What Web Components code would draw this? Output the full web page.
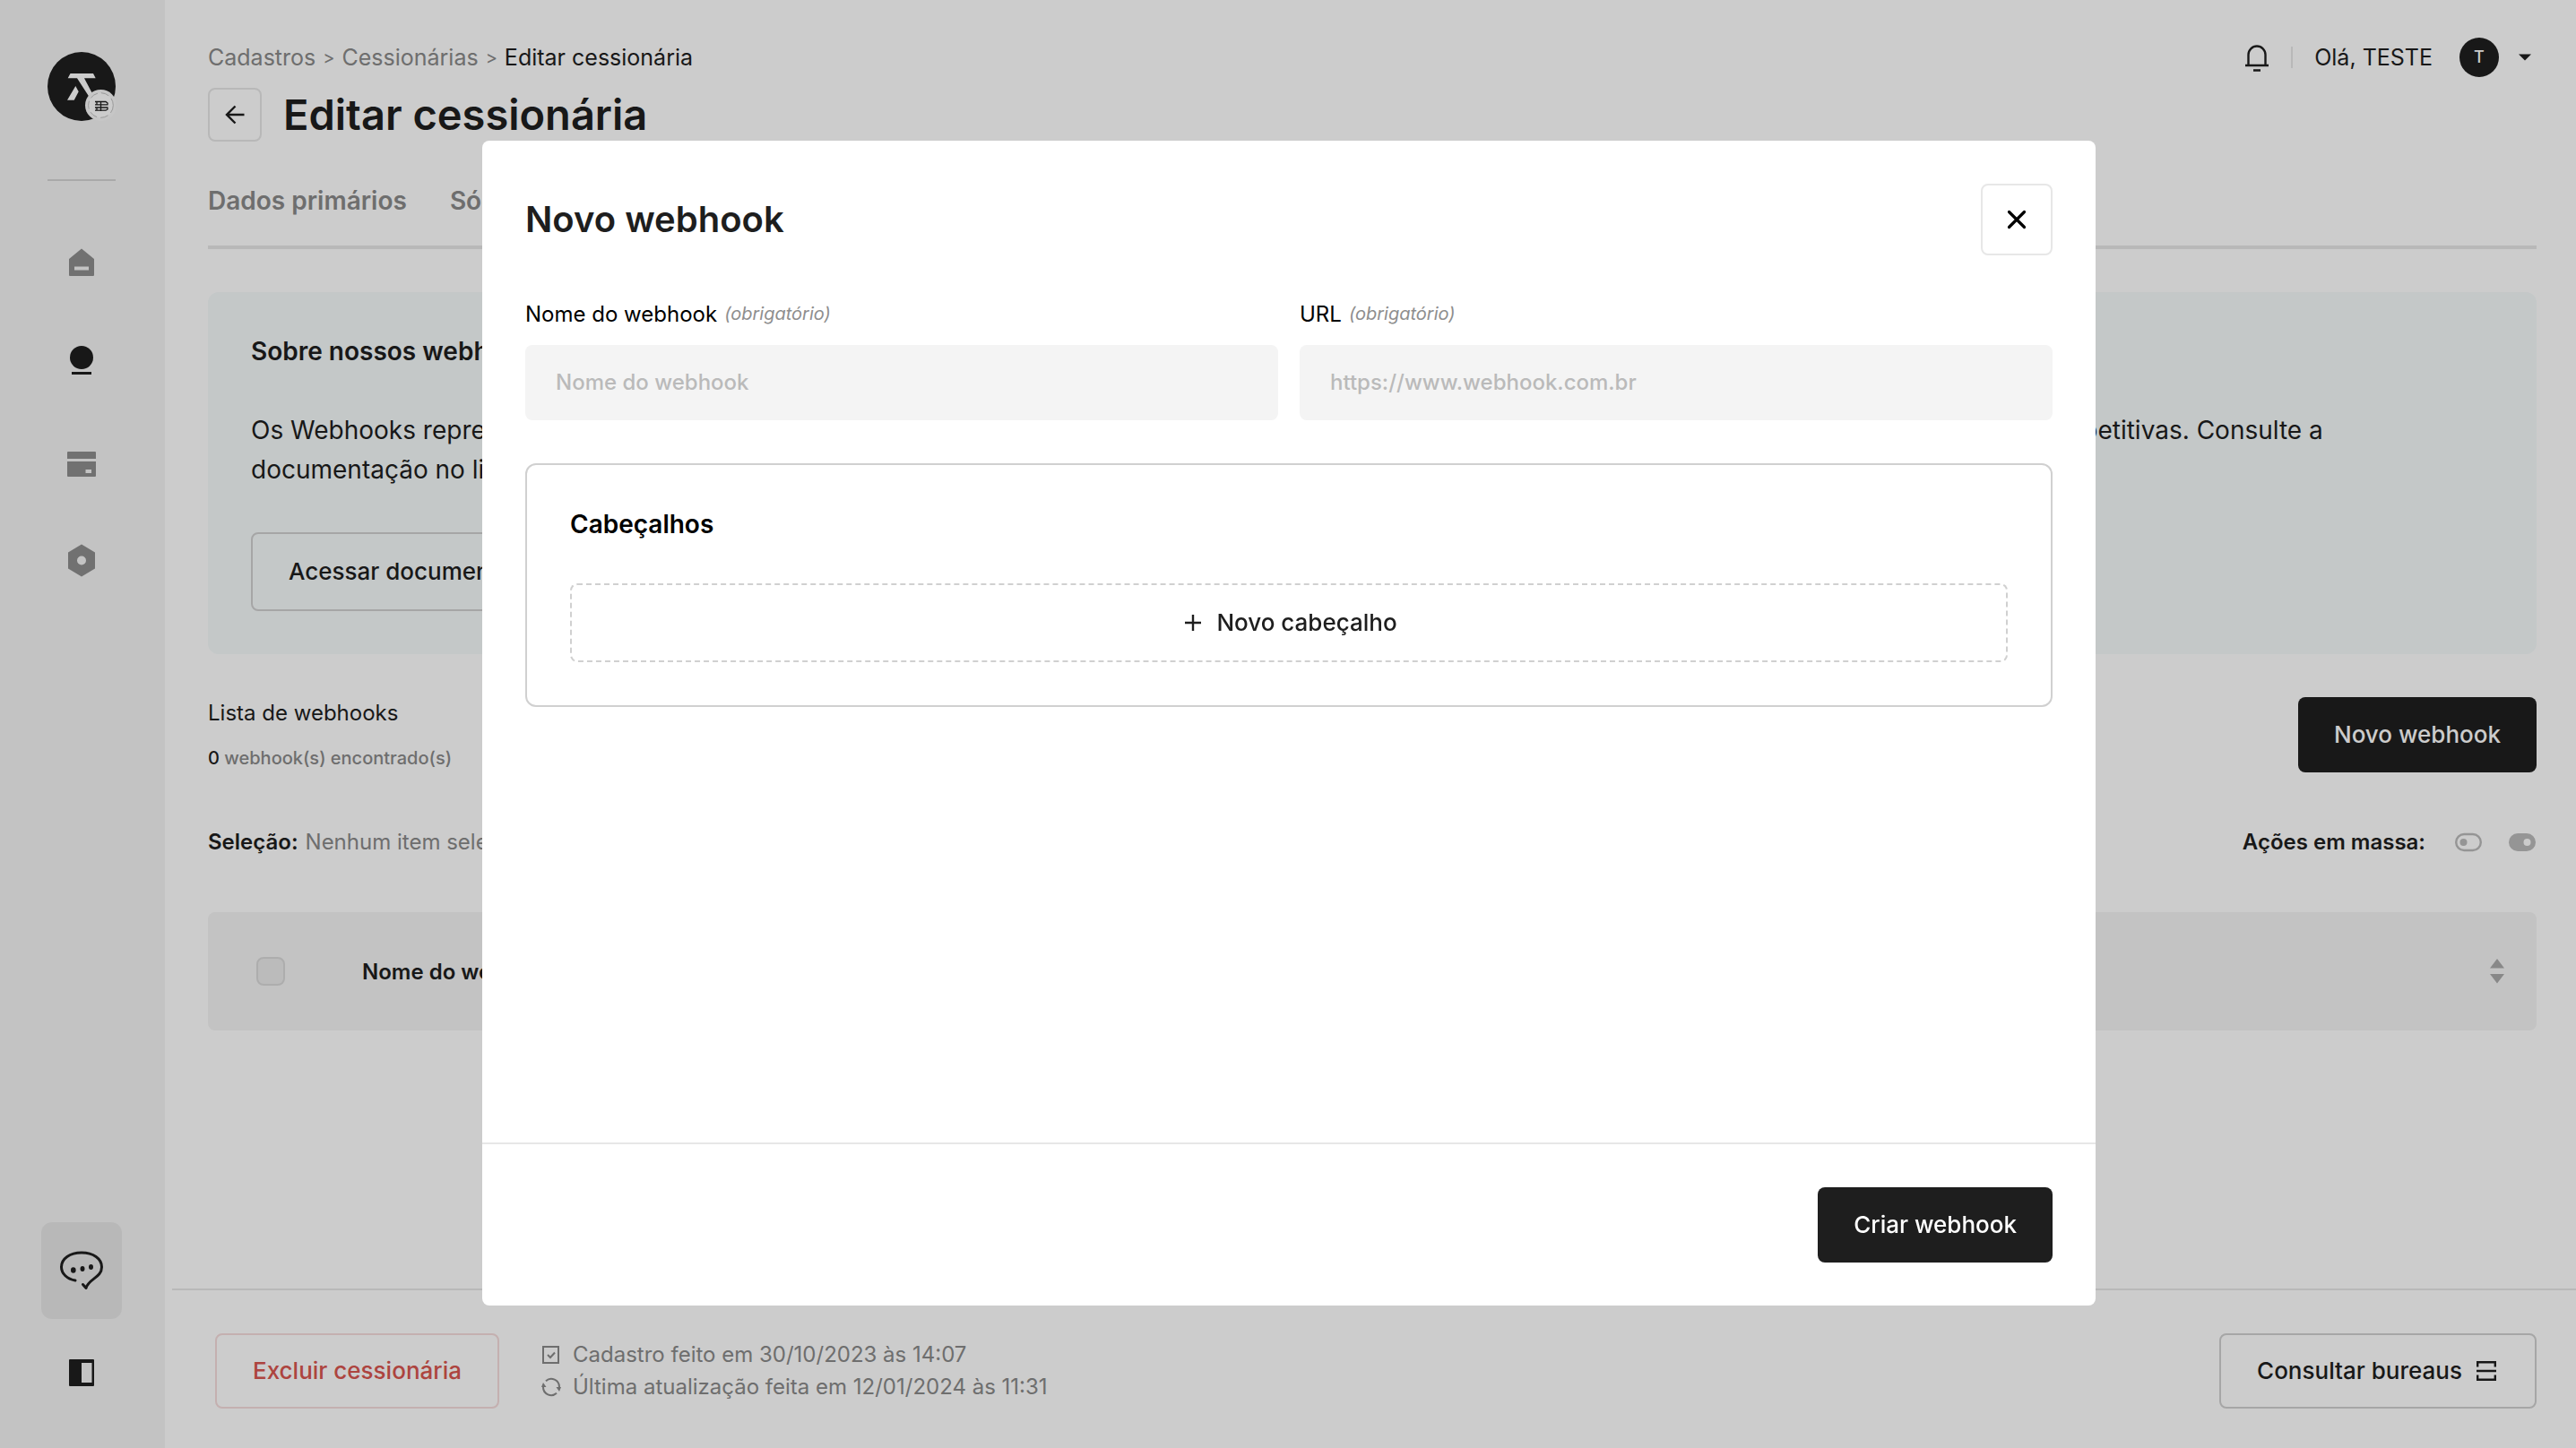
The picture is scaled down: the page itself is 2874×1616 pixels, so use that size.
<!DOCTYPE html>
<html lang="pt-BR">
<head>
<meta charset="utf-8">
<meta name="viewport" content="width=device-width, initial-scale=1">
<title>Editar cessionária</title>
<style>
  html, body { height: 100%; margin: 0; }
  body {
    --ink: #1e1e1e;
    --muted: #8a8a8a;
    --line: #e7e7e7;
    --line-strong: #d0d0d0;
    --soft: #f4f4f4;
    --danger: #d9554f;
    font-family: Inter, "Liberation Sans", sans-serif;
    font-size: 24px;
    color: var(--ink);
    background: #fff;
    overflow: hidden;
  }
</style>
</head>
<body>
<app-shell>
  <side-nav slot="nav"></side-nav>
  <page-header slot="main"></page-header>
  <page-tabs slot="main">
    <a href="#dados">Dados primários</a>
    <a href="#socios">Sócios</a>
  </page-tabs>
  <info-card slot="main">
    <span slot="title">Sobre nossos webhooks</span>
    <span>Os Webhooks representam uma forma prática de integrar a plataforma aos seus sistemas: a cada novo evento uma notificação é enviada, e sem tarefas repetitivas. Consulte a documentação no link abaixo.</span>
    <ui-button slot="action" variant="card">Acessar documentação</ui-button>
  </info-card>
  <webhook-list slot="main"></webhook-list>
  <page-footer slot="footer"></page-footer>
</app-shell>
<modal-dialog heading="Novo webhook">
  <webhook-form></webhook-form>
  <ui-button slot="actions" variant="primary">Criar webhook</ui-button>
</modal-dialog>

<script>
const define = (name, html) => customElements.define(name, class extends HTMLElement {
  constructor() {
    super();
    const t = document.createElement('template');
    t.innerHTML = '<style>*{box-sizing:border-box}svg{display:block}button{font:inherit;color:inherit;background:none;border:0;padding:0;margin:0}a{color:inherit;text-decoration:none}</style>' + html;
    this.attachShadow({ mode: 'open' }).append(t.content.cloneNode(true));
  }
  connectedCallback() {
    const h = this.shadowRoot.querySelector('[data-heading]');
    if (h) h.textContent = this.getAttribute('heading');
  }
});

define('ui-button', `
<style>
  :host { display: inline-flex; }
  button { display: flex; align-items: center; justify-content: center; gap: 16px; height: 84px; padding: 0 40px; border: 2px solid var(--line-strong); border-radius: 8px; font-size: 26px; font-weight: 500; line-height: 32px; white-space: nowrap; }
  :host([variant=primary]) button { background: var(--ink); border: 0; color: #fff; }
  :host([variant=danger]) button { color: var(--danger); border-color: #f6dcdc; }
  :host([variant=card]) button { height: 88px; }
  :host([variant=dashed]) { display: flex; }
  :host([variant=dashed]) button { flex: 1; height: 88px; border-style: dashed; }
</style>
<button type="button"><slot></slot></button>`);

define('app-shell', `
<style>
  :host { display: flex; min-height: 100vh; }
  .page { flex: 1; min-width: 0; display: flex; flex-direction: column; }
  main { flex: 1; padding: 42px 44px 0 48px; }
</style>
<slot name="nav"></slot>
<div class="page"><main><slot name="main"></slot></main><slot name="footer"></slot></div>`);

define('side-nav', `
<style>
  :host { display: flex; flex-direction: column; align-items: center; width: 184px; padding: 58px 2px 60px 0; background: var(--soft); box-sizing: border-box; flex: none; }
  hr { width: 76px; height: 2px; margin: 65px 0; border: 0; background: #d4d4d4; }
  nav { flex: 1; display: flex; flex-direction: column; gap: 63px; }
  .chat { width: 90px; height: 108px; margin-bottom: 36px; border-radius: 12px; background: #e7e7e7; display: grid; place-items: center; }
</style>
<a href="#inicio" aria-label="Início"><svg width="76" height="77" viewBox="0 0 76 77">
  <ellipse cx="38" cy="38.500" rx="38" ry="38.500" fill="#1e1e1e"/>
  <path fill="#fff" d="M25.500 24H51L53.700 29.300H41L54 54H49L33 29.300H22.700ZM31.300 38 34.700 44.300 29.700 53.700H22Z"/>
  <circle cx="59.500" cy="59.500" r="17.500" fill="#f8f8f8"/><circle cx="59.500" cy="59.500" r="13.800" fill="#fff" stroke="#b0b0b0" stroke-width=".8" stroke-dasharray="9 4"/>
  <path fill="none" stroke="#1e1e1e" stroke-width="1.300" d="M53 55.500H65L67 57V58.500M53 65.200H65L67 64V62.500M53 58.800H67.500M53 62H67.500M55 55.500V58.800M55 62V65.200M59.500 55V66"/>
</svg></a>
<hr>
<nav>
  <a href="#home" aria-label="Home"><svg width="48" height="48" viewBox="0 0 48 48" fill="#8e8e8e"><path fill-rule="evenodd" d="M24 10.500 38 22V40Q38 41 37 41H11Q10 41 10 40V22ZM16 30.500V34.500H32V30.500Z"/></svg></a>
  <a href="#cadastros" aria-label="Cadastros" aria-current="page"><svg width="48" height="48" viewBox="0 0 48 48" fill="#1e1e1e"><circle cx="24" cy="21" r="13"/><path d="M13 37H35V40H13Z"/></svg></a>
  <a href="#operacoes" aria-label="Operações"><svg width="48" height="48" viewBox="0 0 48 48" fill="#8e8e8e"><path fill-rule="evenodd" d="M9 15H39Q40 15 40 16V23H8V16Q8 15 9 15ZM8 26H40V42Q40 43 39 43H9Q8 43 8 42ZM28.500 35V39H35V35Z"/></svg></a>
  <a href="#configuracoes" aria-label="Configurações"><svg width="48" height="48" viewBox="0 0 48 48" fill="#8e8e8e"><path fill-rule="evenodd" d="M24 7.500 39 16.500V34.500L24 43.500 9 34.500V16.500ZM24 20.500A5 5 0 1 0 24 30.500 5 5 0 1 0 24 20.500Z"/></svg></a>
</nav>
<button class="chat" aria-label="Ajuda"><svg width="50" height="46" viewBox="0 0 50 46" fill="none" stroke="#1e1e1e" stroke-width="3" stroke-linecap="round" stroke-linejoin="round"><path d="M18 34C9 32.500 2.500 26.500 2.500 19 2.500 9.500 12 3 25 3S47.500 9.500 47.500 19C47.500 31 33 32 30 42.500L26.500 38.500"/><g fill="#1e1e1e" stroke="none"><ellipse cx="15.800" cy="22.500" rx="2.800" ry="3.200"/><ellipse cx="26" cy="21" rx="2.500" ry="3"/><ellipse cx="35.500" cy="19" rx="2.500" ry="3"/></g></svg></button>
<button aria-label="Alternar menu"><svg width="48" height="48" viewBox="0 0 48 48"><path fill="#1e1e1e" fill-rule="evenodd" d="M11 9H37Q38 9 38 10V38Q38 39 37 39H11Q10 39 10 38V10Q10 9 11 9ZM24 13V35H35.500V13Z"/></svg></button>`);

define('page-header', `
<style>
  :host { display: flex; justify-content: space-between; }
  .left { display: flex; flex-direction: column; gap: 12px; }
  ol { display: flex; align-items: center; gap: 8px; height: 44px; margin: 0; padding: 0; list-style: none; font-size: 25px; line-height: 32px; color: var(--muted); }
  li { display: flex; align-items: center; gap: 8px; }
  li + li::before { content: ">"; font-size: 20px; }
  [aria-current] { color: var(--ink); }
  .title { display: flex; align-items: center; gap: 24px; height: 60px; }
  .back { width: 60px; height: 60px; border: 2px solid var(--line); border-radius: 8px; display: grid; place-items: center; }
  h1 { margin: 0; font-size: 47px; font-weight: 600; line-height: 60px; }
  .user { display: flex; align-items: center; height: 44px; font-size: 25px; line-height: 32px; }
  .sep { width: 2px; height: 24px; margin: 0 24px; background: var(--line); }
  .me { display: flex; align-items: center; gap: 22px; }
  .avatar { width: 44px; height: 44px; margin-left: 8px; border-radius: 50%; background: var(--ink); color: #fff; font-size: 18px; font-weight: 500; display: grid; place-items: center; }
  .me svg { margin-right: 6px; }
</style>
<div class="left">
  <nav aria-label="Trilha"><ol><li><a href="#cadastros">Cadastros</a></li><li><a href="#cessionarias">Cessionárias</a></li><li><a href="#editar" aria-current="page">Editar cessionária</a></li></ol></nav>
  <div class="title">
    <button class="back" aria-label="Voltar"><svg width="24" height="24" viewBox="0 0 24 24" fill="none" stroke="#1e1e1e" stroke-width="2.400"><path d="M22.500 12H3M12.500 2.500 3 12 12.500 21.500"/></svg></button>
    <h1>Editar cessionária</h1>
  </div>
</div>
<div class="user">
  <button aria-label="Notificações"><svg width="28" height="32" viewBox="0 0 28 32" fill="none" stroke="#1e1e1e" stroke-width="2.400"><path d="M1 25H27M4.500 25V13A9.500 9.500 0 0 1 23.500 13V25M10 30.500H18"/></svg></button>
  <span class="sep"></span>
  <button class="me"><span>Olá, TESTE</span><span class="avatar">T</span><svg width="14" height="8" viewBox="0 0 14 8"><path fill="#1e1e1e" d="M0 .5H14L7 7.500Z"/></svg></button>
</div>`);

define('page-tabs', `
<style>
  :host { display: flex; gap: 48px; margin-top: 46px; padding-bottom: 30px; border-bottom: 4px solid #e7e7e7; }
  ::slotted(a) { color: var(--muted); text-decoration: none; font-size: 28px; font-weight: 600; line-height: 40px; }
</style>
<slot></slot>`);

define('info-card', `
<style>
  :host { display: block; margin-top: 48px; padding: 48px; border-radius: 12px; background: #f5fafb; }
  h2 { margin: 0; font-size: 28px; font-weight: 600; line-height: 36px; }
  p { margin: 48px 0; font-size: 28px; line-height: 44px; max-width: 2400px; }
</style>
<h2><slot name="title"></slot></h2>
<p><slot></slot></p>
<slot name="action"></slot>`);

define('webhook-list', `
<style>
  :host { display: block; margin-top: 48px; }
  .row { display: flex; justify-content: space-between; align-items: center; }
  h3 { margin: 0 0 16px; font-size: 24px; font-weight: 400; line-height: 36px; }
  .count { margin: 0; font-size: 20px; font-weight: 500; line-height: 32px; color: var(--muted); }
  .count b { font-weight: 500; color: var(--ink); }
  .select { height: 32px; margin: 62px 0; line-height: 32px; color: var(--muted); }
  strong { font-weight: 600; color: var(--ink); }
  .select > div { display: flex; gap: 8px; }
  .select .mass { gap: 28px; align-items: center; }
  .mass strong { margin-right: 4px; }
  table { width: 100%; border-collapse: separate; border-spacing: 0; background: var(--soft); border-radius: 8px; }
  th { height: 132px; padding: 0; text-align: left; font-size: 24px; font-weight: 600; }
  th:first-child { width: 172px; padding-left: 54px; }
  th:last-child { width: 88px; padding-left: 35px; }
  th button { display: block; }
  input { appearance: none; display: block; width: 32px; height: 32px; margin: 0; border: 2px solid #d9d9d9; border-radius: 8px; background: #eaeaea; }
</style>
<div class="row">
  <div><h3>Lista de webhooks</h3><p class="count"><b>0</b> webhook(s) encontrado(s)</p></div>
  <ui-button variant="primary">Novo webhook</ui-button>
</div>
<div class="row select">
  <div><strong>Seleção:</strong><span>Nenhum item selecionado</span></div>
  <div class="mass"><strong>Ações em massa:</strong>
    <button aria-label="Desativar"><svg width="32" height="22" viewBox="0 0 32 22"><rect x="2.200" y="2" width="27.600" height="18" rx="9" fill="none" stroke="#bbb" stroke-width="2.400"/><circle cx="10.500" cy="11" r="4" fill="#bbb"/></svg></button>
    <button aria-label="Ativar"><svg width="32" height="22" viewBox="0 0 32 22"><path fill="#bbb" fill-rule="evenodd" d="M11 1H21A10 10 0 0 1 21 21H11A10 10 0 0 1 11 1ZM21.500 7A4 4 0 1 0 21.500 15 4 4 0 1 0 21.500 7Z"/></svg></button>
  </div>
</div>
<table><thead><tr>
  <th><input type="checkbox" aria-label="Selecionar todos"></th>
  <th>Nome do webhook</th>
  <th><button aria-label="Ordenar"><svg width="18" height="28" viewBox="0 0 18 28" fill="#ababab"><path d="M9 0 17 10.500H1ZM1 17H17L9 27.500Z"/></svg></button></th>
</tr></thead></table>`);

define('page-footer', `
<style>
  :host { display: flex; align-items: center; margin-left: 8px; padding: 48px 44px 44px 48px; border-top: 2px solid #e7e7e7; }
  ul { flex: 1; margin: 0 0 0 46px; padding: 0; list-style: none; line-height: 36px; color: var(--muted); }
  li { display: flex; align-items: center; gap: 12px; }
</style>
<ui-button variant="danger">Excluir cessionária</ui-button>
<ul>
  <li><svg width="24" height="24" viewBox="0 0 24 24" fill="none" stroke="#8a8a8a" stroke-width="2"><path d="M3 3H20V21H3ZM8 12 11 15 16 9.500"/></svg>Cadastro feito em 30/10/2023 às 14:07</li>
  <li><svg width="24" height="24" viewBox="0 0 24 24" fill="none" stroke="#8a8a8a" stroke-width="2"><path d="M6 5.200A9 9 0 0 1 21 12M18 18.800A9 9 0 0 1 3 12"/><path fill="#8a8a8a" stroke="none" d="M17.500 12H23L21 17ZM1 12H6.500L3 7Z"/></svg>Última atualização feita em 12/01/2024 às 11:31</li>
</ul>
<ui-button>Consultar bureaus <svg width="25" height="24" viewBox="0 0 25 24" fill="none" stroke="#1e1e1e" stroke-width="2.400"><path d="M1.200 7.500V2.200H20.800V7.500M1.200 16.500V21.800H20.800V16.500M0 12H22"/></svg></ui-button>`);

define('modal-dialog', `
<style>
  :host { position: fixed; inset: 0; display: grid; place-items: center; padding: 0 0 2px 2px; background: rgba(0,0,0,.2); }
  section { display: flex; flex-direction: column; width: min(1800px, 96vw); height: min(1300px, 96vh); border-radius: 8px; background: #fff; }
  header { display: flex; align-items: center; justify-content: space-between; padding: 48px; }
  h2 { margin: 0; font-size: 40px; font-weight: 600; line-height: 48px; }
  .close { width: 80px; height: 80px; border: 2px solid var(--line); border-radius: 8px; display: grid; place-items: center; }
  .body { flex: 1; padding: 0 48px; }
  footer { display: flex; justify-content: flex-end; padding: 48px; border-top: 2px solid var(--line); }
</style>
<section role="dialog" aria-modal="true" aria-labelledby="t">
  <header><h2 id="t" data-heading></h2><button class="close" aria-label="Fechar"><svg width="24" height="24" viewBox="0 0 24 24" fill="none" stroke="#000" stroke-width="3.200" stroke-linecap="round"><path d="M3.500 3.500 20.500 20.500M20.500 3.500 3.500 20.500"/></svg></button></header>
  <div class="body"><slot></slot></div>
  <footer><slot name="actions"></slot></footer>
</section>`);

define('webhook-form', `
<style>
  :host { display: block; color: #000; }
  .fields { display: grid; grid-template-columns: 1fr 1fr; gap: 24px; }
  label { display: flex; align-items: center; gap: 8px; height: 34px; margin-bottom: 18px; font-size: 24px; }
  em { font-size: 20px; color: #8e8e8e; }
  input { display: block; width: 100%; height: 84px; padding: 0 34px 2px; border: 0; border-radius: 8px; background: #f4f4f4; font: 500 24px Inter, "Liberation Sans", sans-serif; color: #1e1e1e; }
  input::placeholder { color: #bababa; opacity: 1; }
  fieldset { min-width: 0; margin: 48px 0 0; padding: 48px; border: 2px solid var(--line-strong); border-radius: 12px; }
  h3 { margin: 0 0 48px; font-size: 28px; font-weight: 600; line-height: 36px; }
  ui-button { color: var(--ink); }
</style>
<div class="fields">
  <div><label for="nome">Nome do webhook <em>(obrigatório)</em></label><input id="nome" type="text" placeholder="Nome do webhook"></div>
  <div><label for="url">URL <em>(obrigatório)</em></label><input id="url" type="url" placeholder="https://www.webhook.com.br"></div>
</div>
<fieldset aria-label="Cabeçalhos">
  <h3>Cabeçalhos</h3>
  <ui-button variant="dashed"><svg width="24" height="20" viewBox="0 0 24 20" fill="none" stroke="#1e1e1e" stroke-width="2.400"><path d="M14 1V19M5 10H23"/></svg>Novo cabeçalho</ui-button>
</fieldset>`);
</script>
</body>
</html>
